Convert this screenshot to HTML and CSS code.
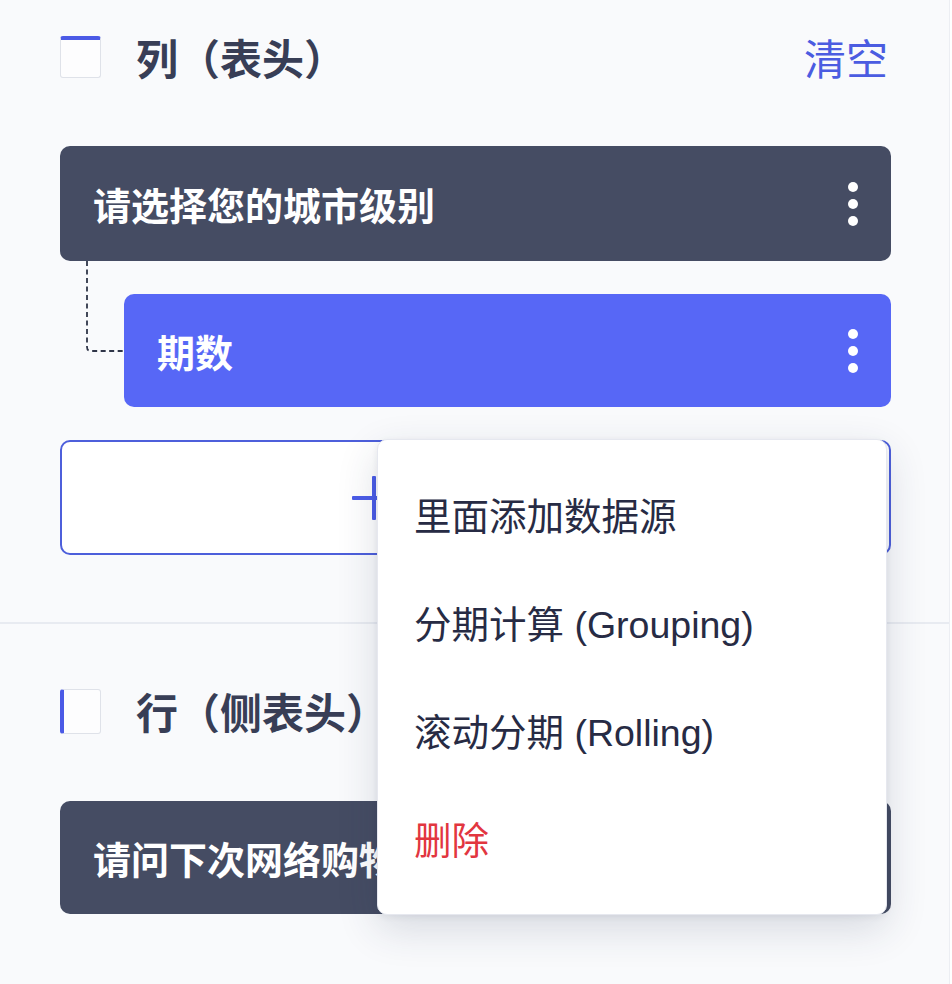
FILE: index.html
```html
<!DOCTYPE html>
<html lang="zh-CN">
<head>
<meta charset="utf-8">
<title>表头设置</title>
<link rel="stylesheet" href="styles.css">
</head>
<body>
<div class="panel">
  <section class="section section-cols">
    <div class="sec-head">
      <span class="cb cb-top"></span>
      <h2 class="sec-title">列（表头）</h2>
      <a class="clear">清空</a>
    </div>
    <div class="tree">
      <svg class="connector" width="60" height="100" viewBox="0 0 60 100">
        <path d="M1 0 V86 Q1 90 5 90 H60" fill="none" stroke="#2f3548" stroke-width="1.8" stroke-dasharray="5 3.5"/>
      </svg>
      <div class="card card-dark">
        <span class="card-label">请选择您的城市级别</span>
        <span class="dots"><i></i><i></i><i></i></span>
      </div>
      <div class="card card-blue card-child">
        <span class="card-label">期数</span>
        <span class="dots"><i></i><i></i><i></i></span>
      </div>
      <div class="add-btn">
        <span class="plus"></span>
      </div>
    </div>
  </section>
  <div class="divider"></div>
  <section class="section section-rows">
    <div class="sec-head">
      <span class="cb cb-left"></span>
      <h2 class="sec-title">行（侧表头）</h2>
    </div>
    <div class="card card-dark card-row">
      <span class="card-label">请问下次网络购物的时间</span>
      <span class="dots"><i></i><i></i><i></i></span>
    </div>
  </section>

  <ul class="menu">
    <li class="menu-item">里面添加数据源</li>
    <li class="menu-item">分期计算 (Grouping)</li>
    <li class="menu-item">滚动分期 (Rolling)</li>
    <li class="menu-item danger">删除</li>
  </ul>
</div>
</body>
</html>
```

FILE: styles.css
```css
* { box-sizing: border-box; }
html, body {
  margin: 0;
  padding: 0;
  background: #ffffff;
}
body {
  font-family: "Noto Sans CJK SC", "Noto Sans", sans-serif;
  width: 952px;
  height: 984px;
  overflow: hidden;
}
.panel {
  position: relative;
  width: 950px;
  height: 984px;
  background: #f9fafc;
  border-right: 1px solid #eceef3;
  padding: 0 58px 0 60px;
}
.section-cols {
  padding-top: 36px;
  padding-bottom: 67px;
}
.section-rows {
  padding-top: 66px;
}
.sec-head {
  display: flex;
  align-items: center;
  height: 42px;
}
.cb {
  width: 41px;
  height: 42px;
  border: 1px solid #dfe2e9;
  border-radius: 3px;
  background: #fdfdfe;
  flex: none;
}
.cb-top { border-top: 4px solid #4b5ae6; }
.cb-left { border-left: 4px solid #4b5ae6; height: 45px; }
.sec-title {
  margin: 0 0 0 35px;
  font-size: 42px;
  font-weight: 700;
  color: #383e56;
  line-height: 1;
  flex: 1;
}
.clear {
  font-size: 42px;
  color: #4b5ce1;
  line-height: 1;
  margin-right: 3px;
}
.tree {
  position: relative;
  margin-top: 68px;
  display: flex;
  flex-direction: column;
  gap: 33px;
}
.connector {
  position: absolute;
  left: 26px;
  top: 115px;
}
.card {
  position: relative;
  height: 115px;
  border-radius: 10px;
  display: flex;
  align-items: center;
  justify-content: space-between;
  padding: 0 33px 0 33px;
  color: #ffffff;
}
.card-dark { background: #454c63; }
.card-blue { background: #5767f6; height: 113px; }
.card-child { margin-left: 64px; }
.card-row { margin-top: 69px; height: 113px; }
.card-label {
  font-size: 38px;
  font-weight: 700;
  line-height: 1;
}
.dots {
  display: flex;
  flex-direction: column;
  gap: 7px;
}
.dots i {
  display: block;
  width: 10px;
  height: 10px;
  border-radius: 50%;
  background: #ffffff;
}
.add-btn {
  height: 115px;
  border: 2px solid #4d5fdb;
  border-radius: 10px;
  background: #ffffff;
  display: flex;
  align-items: center;
  padding-left: 290px;
}
.plus {
  position: relative;
  width: 44px;
  height: 44px;
}
.plus::before, .plus::after {
  content: "";
  position: absolute;
  background: #4b5ce8;
  border-radius: 1px;
}
.plus::before { left: 20px; top: 0; width: 4px; height: 44px; }
.plus::after { top: 20px; left: 0; height: 4px; width: 44px; }
.divider {
  height: 2px;
  background: #e8ebf1;
  margin: 0 -58px 0 -60px;
}
.menu {
  position: absolute;
  left: 377px;
  top: 439px;
  width: 510px;
  height: 476px;
  margin: 0;
  padding: 19px 0 0 0;
  list-style: none;
  background: #ffffff;
  border-radius: 10px;
  border: 1px solid #e6e8ef;
  box-shadow: 0 14px 40px rgba(40, 50, 80, 0.16), 0 2px 6px rgba(40, 50, 80, 0.08);
}
.menu-item {
  height: 108px;
  display: flex;
  align-items: center;
  padding-left: 36px;
  font-family: "Liberation Sans", "Noto Sans CJK SC", sans-serif;
  font-size: 37.5px;
  color: #272b44;
}
.menu-item.danger { color: #e2363f; }
```
